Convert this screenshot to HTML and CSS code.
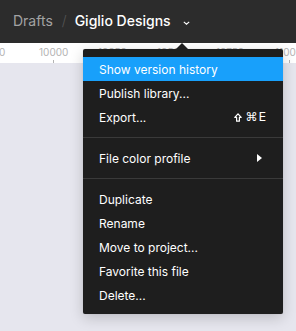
FILE: index.html
```html
<!DOCTYPE html>
<html lang="en">
<head>
    <meta charset="UTF-8">
    <meta name="viewport" content="width=device-width, initial-scale=1.0">
    <title>Giglio Designs</title>
    <link rel="stylesheet" href="styles.css">
</head>
<body>
    <div class="app">
        <div class="topbar">
            <span class="crumb">Drafts</span>
            <span class="slash">/</span>
            <span class="title">Giglio Designs</span>
            <svg class="chevron" width="7" height="4" viewBox="0 0 7 4">
                <polyline points="0.8,0.8 3.5,3.2 6.2,0.8" fill="none" stroke="#fff" stroke-width="1.1"/>
            </svg>
        </div>
        <div class="ruler">
            <span class="mark first">0</span>
            <span class="mark">10000</span>
            <span class="mark">10250</span>
            <span class="mark">10500</span>
            <span class="mark">10750</span>
            <span class="mark">11000</span>
        </div>
        <div class="canvas"></div>

        <div class="menu">
            <div class="menu-arrow"></div>
            <div class="item active">Show version history</div>
            <div class="item">Publish library...</div>
            <div class="item">Export...
                <span class="shortcut">
                    <svg width="8" height="9" viewBox="0 0 8 9">
                        <path d="M4 0.8 L7.2 4.4 H5.4 V8.2 H2.6 V4.4 H0.8 Z" fill="none" stroke="#fff" stroke-width="1.2" stroke-linejoin="round"/>
                    </svg>⌘E
                </span>
            </div>
            <div class="sep"></div>
            <div class="item">File color profile<span class="sub"></span></div>
            <div class="sep"></div>
            <div class="item">Duplicate</div>
            <div class="item">Rename</div>
            <div class="item">Move to project...</div>
            <div class="item">Favorite this file</div>
            <div class="item">Delete...</div>
        </div>
    </div>
</body>
</html>
```

FILE: styles.css
```css
html, body {
    margin: 0;
    height: 100%;
}
body {
    font-family: Inter, "Noto Sans", sans-serif;
    background-color: #e6e6ee;
}
.app {
    display: flex;
    flex-direction: column;
    height: 100%;
    position: relative;
    overflow: hidden;
}
.topbar {
    height: 43px;
    background-color: #2c2c2c;
    display: flex;
    align-items: center;
    padding-left: 13px;
    padding-bottom: 3px;
    box-sizing: border-box;
    font-size: 14px;
}
.crumb {
    color: #a3a3a3;
}
.slash {
    color: #555;
    font-weight: 300;
    margin: 0 8px 0 9px;
}
.title {
    color: #fff;
    font-weight: 500;
}
.chevron {
    margin-left: 12px;
    margin-top: 6px;
}
.ruler {
    height: 20px;
    background-color: #fff;
    display: flex;
    align-items: flex-start;
    padding-top: 3px;
    box-sizing: border-box;
    font-size: 10px;
    color: #b3b3b3;
    white-space: nowrap;
}
.mark {
    position: relative;
    flex: none;
    width: 59px;
}
.mark.first {
    width: 40px;
    margin-left: -1px;
}
.mark::after {
    content: "";
    position: absolute;
    left: 14px;
    top: 14px;
    width: 1px;
    height: 3px;
    background-color: #b3b3b3;
}
.mark.first::after {
    display: none;
}
.canvas {
    flex: 1;
}
.menu {
    position: absolute;
    left: 83px;
    top: 49px;
    width: 200px;
    padding: 8px 0 7px;
    background-color: #1e1e1e;
    border-radius: 2px;
    box-shadow: 0 4px 14px rgba(0,0,0,0.18), 0 0 1px rgba(0,0,0,0.2);
    color: #fff;
    font-size: 12px;
}
.menu-arrow {
    position: absolute;
    top: -6px;
    left: 93px;
    width: 0;
    height: 0;
    border-left: 6px solid transparent;
    border-right: 6px solid transparent;
    border-bottom: 6px solid #1e1e1e;
}
.item {
    height: 24px;
    display: flex;
    align-items: center;
    justify-content: space-between;
    padding: 0 16px;
}
.item.active {
    background-color: #18a0fb;
}
.shortcut {
    display: flex;
    align-items: center;
    gap: 3px;
    font-family: "DejaVu Sans", sans-serif;
    font-size: 12px;
    letter-spacing: 1px;
}
.sub {
    width: 0;
    height: 0;
    margin-right: 5px;
    border-top: 4px solid transparent;
    border-bottom: 4px solid transparent;
    border-left: 5px solid #fff;
}
.sep {
    height: 1px;
    margin: 8px 0;
    background-color: #3a3a3a;
}
```
